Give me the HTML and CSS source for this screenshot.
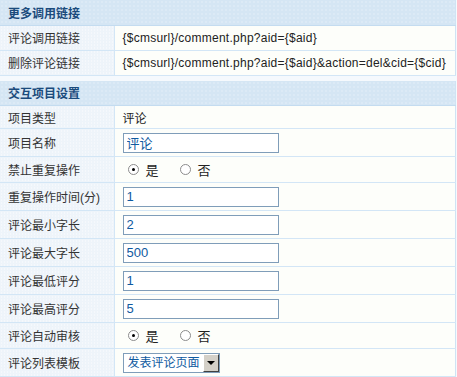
FILE: index.html
```html
<!DOCTYPE html>
<html lang="zh-CN">
<head>
  <meta charset="UTF-8" />
  <title>交互项目设置</title>
  <link rel="stylesheet" href="styles.css">
</head>
<body>

<table class="panel links">
  <tr><th colspan="2">更多调用链接</th></tr>
  <tr>
    <td class="label">评论调用链接</td>
    <td class="value code">{$cmsurl}/comment.php?aid={$aid}</td>
  </tr>
  <tr>
    <td class="label">删除评论链接</td>
    <td class="value code">{$cmsurl}/comment.php?aid={$aid}&amp;action=del&amp;cid={$cid}</td>
  </tr>
</table>

<table class="panel">
  <tr><th colspan="2">交互项目设置</th></tr>
  <tr class="short">
    <td class="label">项目类型</td>
    <td class="value">评论</td>
  </tr>
  <tr>
    <td class="label">项目名称</td>
    <td class="value"><input class="txt" type="text" value="评论"></td>
  </tr>
  <tr class="radio-row">
    <td class="label">禁止重复操作</td>
    <td class="value"><div class="opts">
      <span class="opt"><span class="radio on"></span>是</span>
      <span class="opt"><span class="radio"></span>否</span>
    </div></td>
  </tr>
  <tr>
    <td class="label">重复操作时间(分)</td>
    <td class="value"><input class="txt" type="text" value="1"></td>
  </tr>
  <tr>
    <td class="label">评论最小字长</td>
    <td class="value"><input class="txt" type="text" value="2"></td>
  </tr>
  <tr>
    <td class="label">评论最大字长</td>
    <td class="value"><input class="txt" type="text" value="500"></td>
  </tr>
  <tr>
    <td class="label">评论最低评分</td>
    <td class="value"><input class="txt" type="text" value="1"></td>
  </tr>
  <tr>
    <td class="label">评论最高评分</td>
    <td class="value"><input class="txt" type="text" value="5"></td>
  </tr>
  <tr class="radio-row">
    <td class="label">评论自动审核</td>
    <td class="value"><div class="opts">
      <span class="opt"><span class="radio on"></span>是</span>
      <span class="opt"><span class="radio"></span>否</span>
    </div></td>
  </tr>
  <tr>
    <td class="label">评论列表模板</td>
    <td class="value">
      <span class="select"><span class="select-text">发表评论页面</span><span class="select-btn"></span></span>
    </td>
  </tr>
</table>

</body>
</html>
```

FILE: styles.css
```css
* {
  margin: 0;
  padding: 0;
  box-sizing: border-box;
}

body {
  font-family: "Liberation Sans", "Noto Sans CJK SC", sans-serif;
  font-size: 12px;
  color: #222;
  background: #f5f9fd;
  width: 457px;
}

.panel {
  width: 456px;
  border-collapse: collapse;
  border-right: 1px solid #cfe3f4;
  margin-bottom: 5px;
}

.panel th {
  height: 25px;
  text-align: left;
  padding-left: 8px;
  font-weight: bold;
  font-size: 12px;
  color: #1b4b7c;
  background-color: #d5e6f4;
  background-image: radial-gradient(circle, rgba(255,255,255,0.35) 0.6px, transparent 0.8px);
  background-size: 4px 4px;
  border-bottom: 1px solid #c4dcf0;
}

.panel td {
  height: 28px;
  border-bottom: 1px solid #d3e6f6;
  vertical-align: middle;
}

.panel tr.short td { height: 23px; }
.panel tr.radio-row td { height: 26px; }
.links td { height: 25px; }

.label {
  width: 114px;
  padding-left: 8px;
  color: #333;
  background-color: #eef4fa;
  background-image: radial-gradient(circle, rgba(255,255,255,0.8) 0.6px, transparent 0.8px);
  background-size: 3px 3px;
  border-right: 1px solid #d3e6f6;
  white-space: nowrap;
}

.value {
  padding-left: 8px;
  background: #fdfefa;
  color: #222;
}

.code {
  font-size: 12px;
  letter-spacing: 0.25px;
  white-space: nowrap;
}

.txt {
  width: 156px;
  height: 20px;
  border: 1px solid #7f9db9;
  padding: 0 3px;
  font-family: "Liberation Sans", "Noto Sans CJK SC", sans-serif;
  font-size: 13px;
  color: #0f5aa0;
  background: #fff;
  outline: none;
  vertical-align: middle;
}

.opts {
  display: flex;
  align-items: center;
  gap: 21px;
  padding-left: 5px;
}

.opt {
  display: flex;
  align-items: center;
  gap: 7px;
  font-size: 13px;
}

.radio {
  width: 11px;
  height: 11px;
  border: 1px solid #8c8c8c;
  border-radius: 50%;
  background: #fff;
  position: relative;
}

.radio.on::after {
  content: "";
  position: absolute;
  left: 3px;
  top: 3px;
  width: 3px;
  height: 3px;
  border-radius: 50%;
  background: #000;
}

.select {
  display: inline-flex;
  height: 20px;
  border: 1px solid #7f9db9;
  background: #fff;
  vertical-align: middle;
}

.select-text {
  padding: 0 3px 0 4px;
  line-height: 18px;
  font-size: 12px;
  color: #0f5aa0;
  white-space: nowrap;
}

.select-btn {
  width: 16px;
  height: 18px;
  background: #d4d0c8;
  border: 1px solid;
  border-color: #fff #404040 #404040 #fff;
  position: relative;
}

.select-btn::after {
  content: "";
  position: absolute;
  left: 3px;
  top: 6px;
  border-left: 4px solid transparent;
  border-right: 4px solid transparent;
  border-top: 4px solid #000;
}
```
